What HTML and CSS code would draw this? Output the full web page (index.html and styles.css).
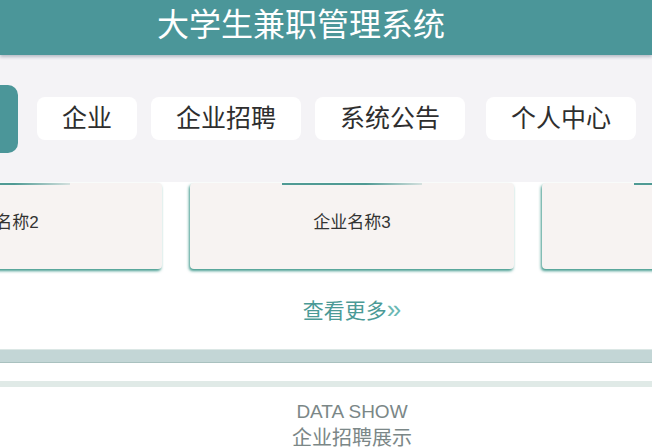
FILE: index.html
```html
<!DOCTYPE html>
<html lang="zh">
<head>
    <meta charset="UTF-8">
    <meta name="viewport" content="width=device-width, initial-scale=1.0">
    <title>大学生兼职管理系统</title>
    <link rel="stylesheet" href="styles.css">
</head>
<body>
    <div class="topbar">
        <h1>大学生兼职管理系统</h1>
    </div>

    <!-- 导航 -->
    <div class="menu">
        <div class="menu-active"></div>
        <div class="menu-item">企业</div>
        <div class="menu-item">企业招聘</div>
        <div class="menu-item">系统公告</div>
        <div class="menu-item">个人中心</div>
    </div>

    <!-- 企业列表 -->
    <div class="company-box">
        <div class="card-row">
            <div class="card">
                <div class="card-line"></div>
                <p class="card-name">企业名称2</p>
            </div>
            <div class="card">
                <div class="card-line"></div>
                <p class="card-name">企业名称3</p>
            </div>
            <div class="card">
                <div class="card-line"></div>
            </div>
        </div>
        <div class="more">查看更多<span class="arrows">»</span></div>
    </div>

    <div class="divider"></div>

    <div class="data-show">
        <div class="data-title">DATA SHOW</div>
        <div class="data-sub">企业招聘展示</div>
    </div>
</body>
</html>
```

FILE: styles.css
```css
body {
    margin: 0;
    overflow: hidden;
    background-color: #fff;
    font-family: "Liberation Sans", "Noto Sans CJK SC", sans-serif;
    color: #333;
}

.topbar {
    height: 55px;
    background-color: #4b9699;
    box-shadow: 0 2px 3px rgba(40, 60, 90, 0.3);
    position: relative;
    z-index: 1;
}

.topbar h1 {
    margin: 0;
    padding-right: 50px;
    text-align: center;
    font-size: 32px;
    font-weight: normal;
    line-height: 50px;
    color: #fff;
}

.menu {
    height: 127px;
    background-color: #f4f3f6;
    display: flex;
    align-items: center;
    gap: 14px;
}

.menu-active {
    width: 18px;
    height: 68px;
    margin-right: 5px;
    background-color: #4b9699;
    border-radius: 0 10px 10px 0;
}

.menu-item {
    height: 43px;
    line-height: 43px;
    padding: 0 25px;
    background-color: #fff;
    border-radius: 8px;
    font-size: 25px;
    color: #2e2e2e;
}

.menu-item:last-child {
    margin-left: 7px;
}

.company-box {
    padding-top: 1px;
}

.card-row {
    display: flex;
    gap: 28px;
    margin-left: -162px;
}

.card {
    flex: 0 0 324px;
    height: 86px;
    background-color: #f7f3f2;
    border-radius: 4px;
    box-shadow: -1px 2px 3px rgba(30, 135, 120, 0.85);
}

.card-line {
    width: 140px;
    height: 2px;
    margin: 0 auto;
    background: linear-gradient(to right, #4f9a94 60%, rgba(79, 154, 148, 0.2));
}

.card-name {
    margin: 28px 0 0;
    text-align: center;
    font-size: 17px;
    line-height: 20px;
    color: #333;
}

.more {
    margin-top: 30px;
    padding-left: 52px;
    text-align: center;
    font-size: 21px;
    line-height: 24px;
    color: #4b9a96;
}

.arrows {
    font-size: 26px;
    line-height: 18px;
    color: #6ab8b3;
}

.divider {
    margin-top: 26px;
    height: 12px;
    background-color: #c3d6d6;
    border-top: 1px solid #dbe7e5;
    border-bottom: 1px solid #a9c1bf;
}

.data-show {
    margin-top: 18px;
    border-top: 6px solid #e0eae7;
    padding-top: 13px;
    padding-left: 52px;
    text-align: center;
}

.data-title {
    font-size: 19px;
    line-height: 24px;
    color: #7b8787;
}

.data-sub {
    font-size: 20px;
    line-height: 28px;
    color: #7b8787;
}
```
